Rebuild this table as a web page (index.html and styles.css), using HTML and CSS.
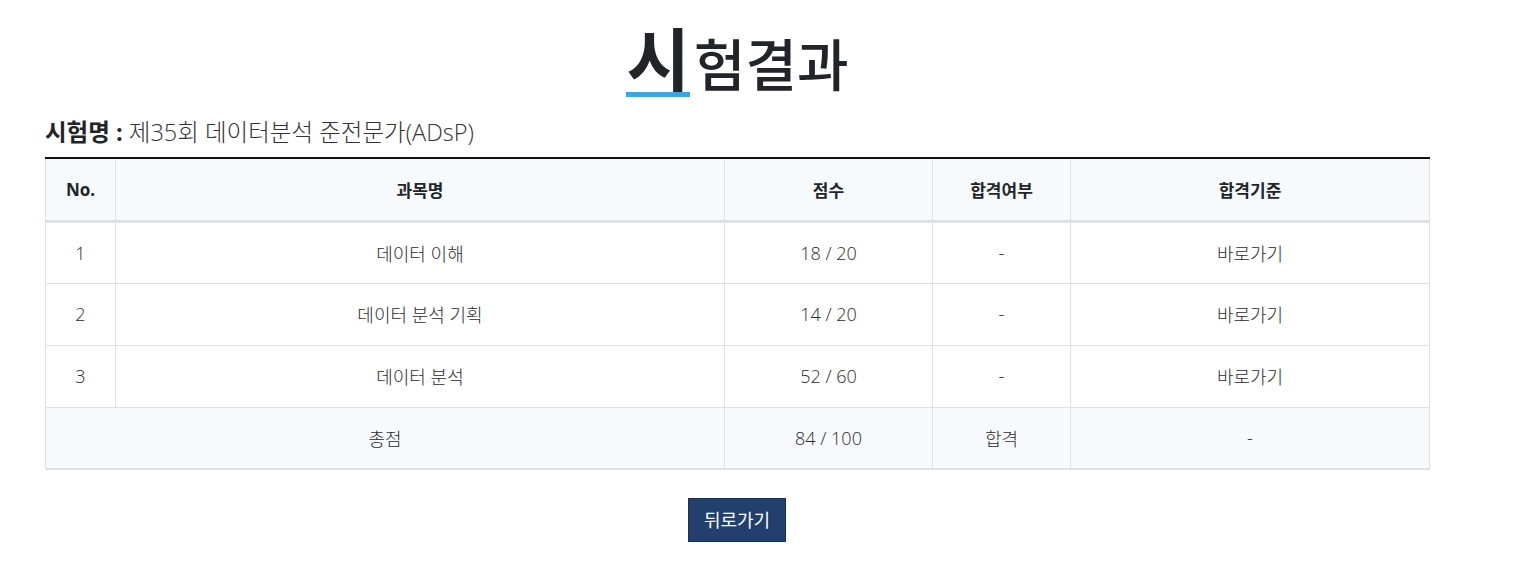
FILE: index.html
```html
<!DOCTYPE html>
<html lang="ko">
<head>
    <meta charset="UTF-8">
    <meta name="viewport" content="width=device-width, initial-scale=1.0">
    <title>시험결과</title>
    <link rel="stylesheet" href="styles.css">
</head>
<body>
    <div class="container">
        <h1 class="page-title"><span class="first">시</span>험결과</h1>

        <div class="exam-name"><strong>시험명 :</strong> 제35회 데이터분석 준전문가(ADsP)</div>

        <table class="result-table">
            <thead>
                <tr>
                    <th class="col-no">No.</th>
                    <th class="col-subject">과목명</th>
                    <th class="col-score">점수</th>
                    <th class="col-pass">합격여부</th>
                    <th>합격기준</th>
                </tr>
            </thead>
            <tbody>
                <tr>
                    <td>1</td>
                    <td>데이터 이해</td>
                    <td>18 / 20</td>
                    <td>-</td>
                    <td><a href="#">바로가기</a></td>
                </tr>
                <tr>
                    <td>2</td>
                    <td>데이터 분석 기획</td>
                    <td>14 / 20</td>
                    <td>-</td>
                    <td><a href="#">바로가기</a></td>
                </tr>
                <tr>
                    <td>3</td>
                    <td>데이터 분석</td>
                    <td>52 / 60</td>
                    <td>-</td>
                    <td><a href="#">바로가기</a></td>
                </tr>
                <tr class="total">
                    <td colspan="2">총점</td>
                    <td>84 / 100</td>
                    <td>합격</td>
                    <td>-</td>
                </tr>
            </tbody>
        </table>

        <div class="btn-area">
            <a href="#" class="btn-back">뒤로가기</a>
        </div>
    </div>
</body>
</html>
```

FILE: styles.css
```css
* {
    margin: 0;
    padding: 0;
    box-sizing: border-box;
}

body {
    font-family: 'Open Sans', 'Noto Sans CJK KR', sans-serif;
    color: #333;
    background: #fff;
}

.container {
    width: 1385px;
    margin: 0 0 0 45px;
}

.page-title {
    text-align: center;
    font-family: 'Noto Sans CJK KR', sans-serif;
    font-size: 56px;
    font-weight: 500;
    color: #212529;
    line-height: 1;
    padding-top: 22px;
    height: 98px;
}

.page-title .first {
    display: inline-block;
    font-size: 69px;
    font-weight: 700;
    line-height: 1;
    padding-bottom: 1px;
    border-bottom: 5px solid #3ba7df;
    margin-right: 4px;
}

.exam-name {
    font-size: 23.5px;
    font-weight: 300;
    color: #333;
    padding: 19px 0 10px;
    border-bottom: 2px solid #111;
    line-height: 30px;
}

.exam-name strong {
    color: #212529;
    font-weight: 700;
}

.result-table {
    width: 100%;
    border-collapse: collapse;
    font-size: 18px;
    text-align: center;
    border-left: 1px solid #dee2e6;
    border-right: 1px solid #dee2e6;
}

.result-table th {
    background: #f7fafd;
    font-weight: 700;
    font-size: 17px;
    color: #212529;
    height: 62px;
    border: 1px solid #dee2e6;
    border-top: none;
    border-bottom: 3px solid #dee2e6;
}

.result-table td {
    height: 62px;
    border: 1px solid #dee2e6;
    color: #2b2b2b;
    font-weight: 300;
}

.col-no { width: 70px; }
.col-subject { width: 609px; }
.col-score { width: 208px; }
.col-pass { width: 138px; }

.result-table a {
    color: #2b2b2b;
    text-decoration: none;
}

.result-table .total td {
    background: #f7fafd;
    border-bottom: 2px solid #dee2e6;
}

.btn-area {
    text-align: center;
    padding-top: 28px;
}

.btn-back {
    display: inline-block;
    background: #233f6e;
    border: 1px solid #17305a;
    color: #fff;
    font-size: 18px;
    text-decoration: none;
    padding: 0 15px;
    height: 44px;
    line-height: 42px;
    margin-left: -1px;
}
```
